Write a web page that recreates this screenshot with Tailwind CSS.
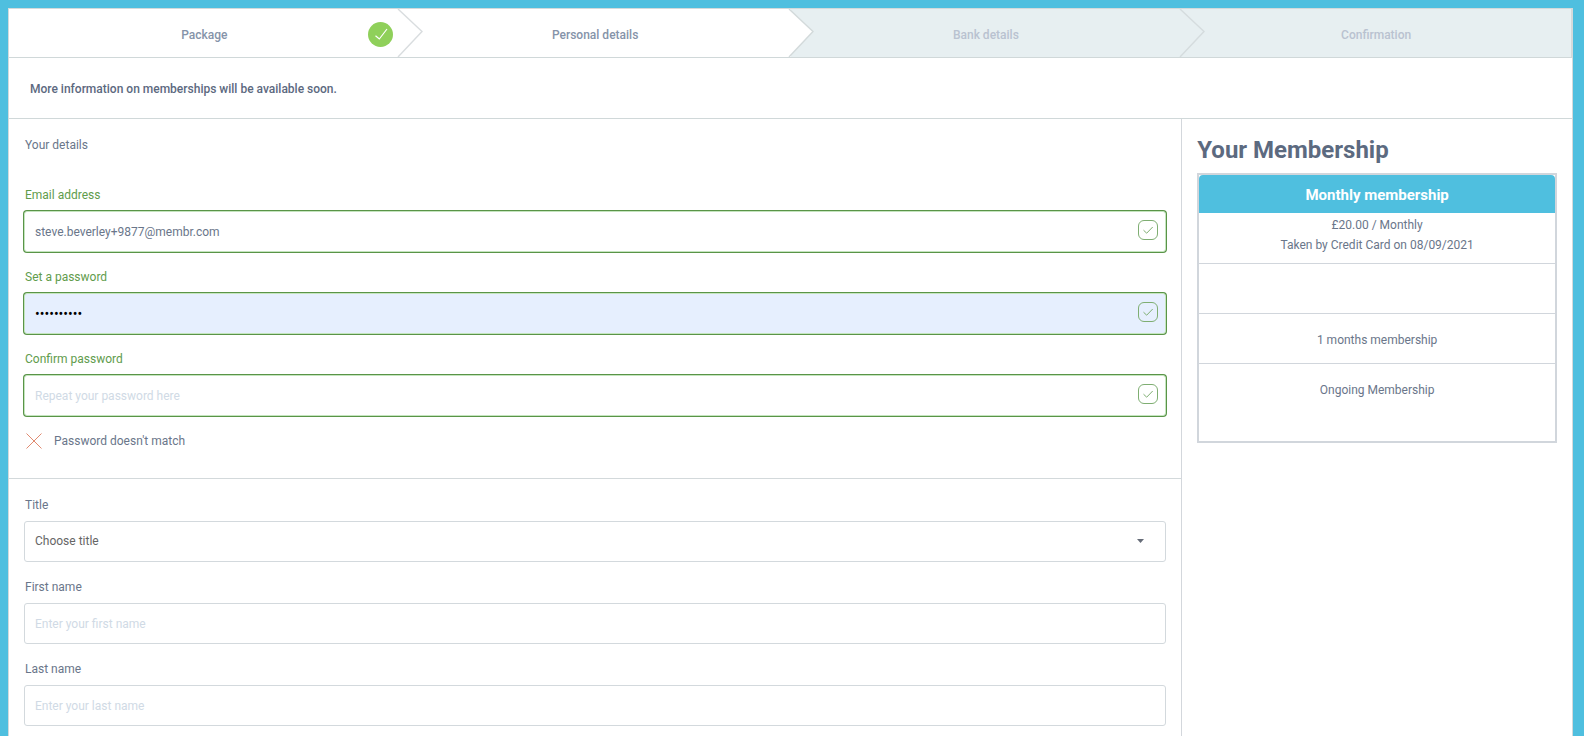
<!DOCTYPE html>
<html lang="en">
<head>
<meta charset="utf-8">
<meta name="viewport" content="width=device-width, initial-scale=1">
<title>Membership – Personal details</title>
<script src="https://cdn.jsdelivr.net/npm/@tailwindcss/browser@4"></script>
</head>
<body class="min-h-screen bg-[#4fbfdf] pt-2 pl-2 pr-[11px] font-[Roboto,sans-serif] text-[12px] leading-5 text-[#6a768a] overflow-x-hidden">
<svg class="hidden">
  <symbol id="valid" viewBox="0 0 20 20"><g fill="none" stroke="#7fae72" stroke-width="1"><rect x="0.5" y="0.5" width="19" height="19" rx="5.5"/><path d="M5.500 10.200 8.700 13.200 14.700 7"/></g></symbol>
</svg>
<div class="flex min-h-[calc(100vh-8px)] flex-col border border-b-0 border-[#d3dadb] bg-white">
  <nav aria-label="Progress" class="border-b border-[#d0d8d9]">
    <ol class="grid h-12 grid-cols-4 font-medium text-[#8593a9]">
      <li class="relative flex items-center justify-center pt-1">
        <a href="#">Package</a>
        <svg class="absolute top-[13px] right-[7px] size-[25px]" viewBox="0 0 25 25" fill="none"><circle cx="12.500" cy="12.500" r="12.500" fill="#8fd05a"/><path d="M7.500 13.700 11.300 17 19 7" stroke="#fff" stroke-width="1.200"/></svg>
        <svg class="absolute top-0 -right-[23px] z-10 h-12 w-[26px]" viewBox="0 0 26 48" fill="none"><path d="M0 0 1 0 25 22.500 1 48H0Z" fill="#fff"/><path d="M1 0 25 22.500 1 48" stroke="#d9dddf" stroke-width="1.400"/></svg>
      </li>
      <li class="relative flex items-center justify-center pt-1">
        <a href="#" aria-current="step">Personal details</a>
        <svg class="absolute top-0 -right-[23px] z-10 h-12 w-[26px]" viewBox="0 0 26 48" fill="none"><path d="M0 0 1 0 25 22.500 1 48H0Z" fill="#fff"/><path d="M1 0 25 22.500 1 48" stroke="#d3dadb" stroke-width="1.400"/></svg>
      </li>
      <li class="relative flex items-center justify-center bg-[#e7eff1] pt-1 text-[#b9c2d0]">
        <span>Bank details</span>
        <svg class="absolute top-0 -right-6 z-10 h-12 w-[26px]" viewBox="0 0 26 48" fill="none"><path d="M1 0 25 22.500 1 48" stroke="#d5dcde" stroke-width="1.400"/></svg>
      </li>
      <li class="flex items-center justify-center border-r border-[#d3dadb] bg-[#e7eff1] pt-1 text-[#b9c2d0]"><span>Confirmation</span></li>
    </ol>
  </nav>
  <p class="border-b border-[#d0d8d9] px-[21px] pt-[21px] pb-[19px] font-medium text-[#5c6980]">More information on memberships will be available soon.</p>
  <div class="grid grow grid-cols-[3fr_1fr]">
    <main class="-mr-px border-r border-[#d3d7dc]">
      <form>
        <section class="flex flex-col gap-[15px] border-b border-[#d3d9db] px-[15px] pt-4 pb-[27px]">
          <h2 class="mb-[15px] px-px">Your details</h2>
          <div>
            <label for="email" class="mb-1.5 block px-px text-[#5f9c4c]">Email address</label>
            <div class="relative">
              <input id="email" type="email" value="steve.beverley+9877@membr.com" class="block h-[41px] w-full rounded-[3px] border border-[#c5e5bf] bg-white px-[10px] outline-none ring-1 ring-[#5a9448]">
              <svg class="absolute top-[9px] right-2 size-5"><use href="#valid"/></svg>
            </div>
          </div>
          <div>
            <label for="pw" class="mb-1.5 block px-px text-[#5f9c4c]">Set a password</label>
            <div class="relative">
              <input id="pw" type="password" value="password12" class="block h-[41px] w-full rounded-[3px] border border-[#c5e5bf] bg-[#e6effe] px-[10px] text-sm text-black outline-none ring-1 ring-[#5a9448]">
              <svg class="absolute top-[9px] right-2 size-5"><use href="#valid"/></svg>
            </div>
          </div>
          <div>
            <label for="pw2" class="mb-1.5 block px-px text-[#5f9c4c]">Confirm password</label>
            <div class="relative">
              <input id="pw2" type="password" placeholder="Repeat your password here" class="block h-[41px] w-full rounded-[3px] border border-[#c5e5bf] bg-white px-[10px] outline-none ring-1 ring-[#5a9448] placeholder:text-[#d0dae5]">
              <svg class="absolute top-[9px] right-2 size-5"><use href="#valid"/></svg>
            </div>
          </div>
          <p class="flex items-center gap-3 px-0.5"><svg class="size-4" viewBox="0 0 16 16" fill="none" stroke="#e08a70"><path d="M0.500 0.500 15.500 15.500M15.500 0.500 0.500 15.500"/></svg>Password doesn't match</p>
        </section>
        <section class="flex flex-col gap-[15px] px-[15px] pt-4 pb-7">
          <div>
            <label for="title" class="mb-1.5 block px-px">Title</label>
            <div class="relative">
              <select id="title" class="block h-[41px] w-full appearance-none rounded-[3px] border border-[#d3d9dd] bg-white px-[10px] pb-0.5 text-[#666]"><option>Choose title</option></select>
              <svg class="pointer-events-none absolute top-[18px] right-[22px] h-1 w-[7px]" viewBox="0 0 7 4"><path d="M0 0h7L3.500 4Z" fill="#666c78"/></svg>
            </div>
          </div>
          <div>
            <label for="first" class="mb-1.5 block px-px">First name</label>
            <input id="first" type="text" placeholder="Enter your first name" class="block h-[41px] w-full rounded-[3px] border border-[#d3d9dd] bg-white px-[10px] placeholder:text-[#d0dae5]">
          </div>
          <div>
            <label for="last" class="mb-1.5 block px-px">Last name</label>
            <input id="last" type="text" placeholder="Enter your last name" class="block h-[41px] w-full rounded-[3px] border border-[#d3d9dd] bg-white px-[10px] placeholder:text-[#d0dae5]">
          </div>
        </section>
      </form>
    </main>
    <aside class="pr-[15px] pl-4 pt-[15px]">
      <h2 class="mb-[7px] text-[24px] leading-8 font-bold text-[#5c6a80]">Your Membership</h2>
      <div class="border-2 border-[#d1d6dc] text-center">
        <h3 class="rounded-t bg-[#4fbfdf] pt-[9px] pb-[7px] text-[15px] leading-[22px] font-bold text-white">Monthly membership</h3>
        <p class="border-b border-[#d1d6dc] pt-0.5 pb-2">£20.00 / Monthly<br>Taken by Credit Card on 08/09/2021</p>
        <p class="h-[50px] border-b border-[#d1d6dc]"></p>
        <p class="h-[50px] border-b border-[#d1d6dc] py-4">1 months membership</p>
        <p class="h-[77px] py-4">Ongoing Membership</p>
      </div>
    </aside>
  </div>
</div>
</body>
</html>
